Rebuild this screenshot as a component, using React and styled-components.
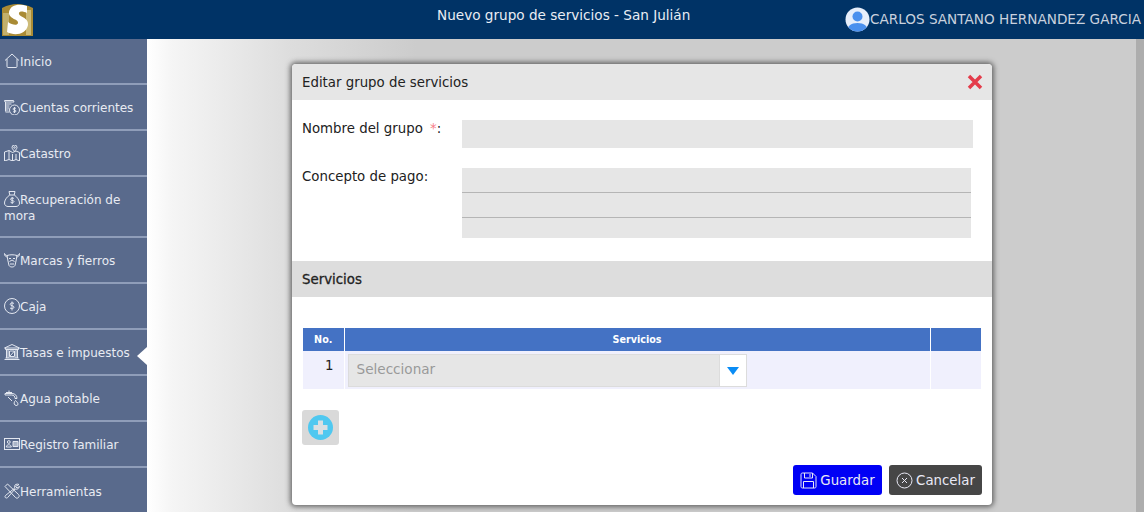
import React from "react";
import styled, { createGlobalStyle } from "styled-components";

const GlobalStyle = createGlobalStyle`
  html, body {
    margin: 0;
    padding: 0;
    height: 100%;
    overflow: hidden;
  }
  body {
    font-family: "DejaVu Sans", sans-serif;
    font-size: 14px;
    color: #222;
  }
  * { box-sizing: border-box; }
`;

const icons = {
  home: (
    <>
      <path d="M1 7.500 8 1l7 6.500" />
      <path d="M3 6v7.500c0 .6.400 1 1 1h8c.6 0 1-.4 1-1V6" />
    </>
  ),
  coins: (
    <>
      <path d="M.5 1.500h9l.5 1.500H1zM1.500 3v9.500M1.500 5h6M1.500 7h4M1.500 9h3.500M1.500 11h3M1.500 13h4" />
      <circle cx="10.500" cy="11" r="5" />
      <path d="M12 9.500c-.8-.8-3-.6-3 .6 0 1.300 3 .6 3 1.900 0 1.200-2.200 1.300-3 .5M10.500 8v6" />
    </>
  ),
  map: (
    <>
      <path d="M.5 7 5 5.500l3.500 2L12 6l3.500 1.500V16L12 14.500 8.500 16 5 14.500.5 16z" />
      <path d="M5 5.500v9M8.500 9v7M12 9v5.500" />
      <path d="M10.500 6.500c-1.500-2-2.500-3-2.500-4a2.500 2.500 0 0 1 5 0c0 1-1 2-2.500 4z" />
      <circle cx="10.500" cy="2.500" r=".8" />
    </>
  ),
  bag: (
    <>
      <path d="M5 .5h6L10.200 4H5.800z" />
      <path d="M5.800 4C2.500 6 .5 9.500.5 12c0 2.500 2 3.500 3.500 3.500h8c1.500 0 3.500-1 3.500-3.500 0-2.500-2-6-5.300-8" />
      <path d="M10 7.500c-.8-.8-3.500-.6-3.500.8 0 1.500 3.500.7 3.500 2.200 0 1.300-2.700 1.400-3.500.6M8.200 6v7" />
    </>
  ),
  bull: (
    <>
      <path d="M3.500 5C1.500 5 .5 3.500.5 1.500c1 1.500 1.500 2 3 2M12.500 5c2 0 3-1.500 3-3.500-1 1.500-1.500 2-3 2" />
      <path d="M3 3.500c3-1 7-1 10 0l-1 5.500-1 4.500c-1 2-5 2-6 0L4 9z" />
      <path d="M5 6.500h2M9 6.500h2M6 12h4M5.500 9.500 8 8l2.500 1.500" />
    </>
  ),
  dollar: (
    <>
      <circle cx="8" cy="8" r="7.500" />
      <path d="M10 5.500c-1-1-3.800-.8-3.800.9 0 1.800 3.800.8 3.800 2.800 0 1.600-2.800 1.800-4 .8M8 3.500v9" />
    </>
  ),
  bank: (
    <>
      <path d="M.5 4 8 .5 15.500 4zM1.500 4v1.500h13V4M.5 15.500h15M1.500 14h13" />
      <path d="M2.500 5.500V14M4 5.500V14M12 5.500V14M13.500 5.500V14" />
      <path d="M5.500 7h5v5.500h-5zM5.500 12.500l5-5.500" />
    </>
  ),
  tap: (
    <>
      <path d="M2 2.500h6M5 .5v2M1 5h6.500c2.500 0 3.500 1.500 3.500 3.500h2C13 5.500 11 3.500 8 3.500H1z" />
      <path d="M11.500 10.500c-1.500 1.500-2 3.500-.5 4.500s3 .5 3-1c0-1-1.500-2.500-2.500-3.500z" />
      <path d="M4 7l4 4" />
    </>
  ),
  card: (
    <>
      <rect x=".5" y="2.500" width="15" height="11" />
      <circle cx="4.800" cy="6" r="1.400" />
      <path d="M2.300 11c0-3 5-3 5 0z" />
      <path d="M9 5.500h5v5H9z" fill="currentColor" fillOpacity=".6" />
    </>
  ),
  tools: (
    <>
      <path d="M1 3.500 3.500 1l11 10.500c1 1 .8 2.200 0 3-.8.800-2 1-3 0z" />
      <path d="M15 1.500c-2-1-4.500 0-4.500 2 0 .6 0 1 .3 1.500L1.500 12.500c-1 1-.5 2.500 1 2.500.5 0 1-.2 1.200-.5L11 6c2 .8 4-.5 4.500-2.500L13 5l-1.500-1.500z" />
    </>
  ),
};

const menu = [
  { label: "Inicio", icon: "home" },
  { label: "Cuentas corrientes", icon: "coins" },
  { label: "Catastro", icon: "map" },
  { label: "Recuperación de mora", icon: "bag", tall: true },
  { label: "Marcas y fierros", icon: "bull" },
  { label: "Caja", icon: "dollar" },
  { label: "Tasas e impuestos", icon: "bank", active: true },
  { label: "Agua potable", icon: "tap" },
  { label: "Registro familiar", icon: "card" },
  { label: "Herramientas", icon: "tools" },
];

const MenuIcon = ({ name }) => (
  <IconSvg viewBox="0 0 16 16" width="16" height="16">
    {icons[name]}
  </IconSvg>
);

const Logo = () => (
  <svg width="34" height="35" viewBox="0 0 34 35">
    <path d="M2 7C8 4 12 3 17 3s10 1 16 4v28H2z" fill="#a98b35" />
    <path d="M26 9h5v25h-5z" fill="#cdbb78" />
    <path d="M3 12h6v22H3z" fill="#c2b06c" />
    <path
      d="M27 5C19 2 10 4 9 11c-1 7 10 7 9 11-.5 3-6 2-10-1l-1 10c7 4 19 3 21-7 1-8-10-8-9-12 .5-2 4-2 8 0z"
      fill="#fff"
    />
  </svg>
);

const Avatar = () => (
  <svg width="25" height="25" viewBox="0 0 25 25">
    <defs>
      <clipPath id="avatarClip">
        <circle cx="12.500" cy="12.500" r="12" />
      </clipPath>
    </defs>
    <circle cx="12.500" cy="12.500" r="12" fill="#e6eefb" />
    <g clipPath="url(#avatarClip)" fill="#4a90ee">
      <circle cx="12.500" cy="9.500" r="5" />
      <path d="M2 25c0-6 4-9 10.500-9S23 19 23 25z" />
    </g>
  </svg>
);

const App = () => (
  <>
    <GlobalStyle />
    <Page>
      <TopBar>
        <LogoBox>
          <Logo />
        </LogoBox>
        <PageTitle>Nuevo grupo de servicios - San Julián</PageTitle>
        <UserBox>
          <Avatar />
          <UserName>CARLOS SANTANO HERNANDEZ GARCIA</UserName>
        </UserBox>
      </TopBar>
      <Body>
        <Sidebar>
          {menu.map((item) => (
            <MenuItem key={item.label} $tall={item.tall} $active={item.active}>
              <div>
                <MenuIcon name={item.icon} />
                {item.label}
              </div>
            </MenuItem>
          ))}
        </Sidebar>
        <Content>
          <Modal>
            <ModalHeader>
              Editar grupo de servicios
              <CloseIcon viewBox="0 0 16 16" width="16" height="16">
                <path d="M2 2 14 14M14 2 2 14" />
              </CloseIcon>
            </ModalHeader>
            <FormRow>
              <FieldLabel>
                Nombre del grupo <Required>*</Required>:
              </FieldLabel>
              <NameInput />
            </FormRow>
            <ConceptRow>
              <FieldLabel>Concepto de pago:</FieldLabel>
              <ConceptBox />
            </ConceptRow>
            <SectionBar>Servicios</SectionBar>
            <TableWrap>
              <Table>
                <thead>
                  <tr>
                    <HeadCell $width={41}>No.</HeadCell>
                    <HeadCell>Servicios</HeadCell>
                    <HeadCell $width={51} />
                  </tr>
                </thead>
                <tbody>
                  <tr>
                    <NumberCell>1</NumberCell>
                    <BodyCell>
                      <SelectBox>
                        <SelectValue>Seleccionar</SelectValue>
                        <SelectArrow>
                          <svg width="12" height="8" viewBox="0 0 12 8">
                            <path d="M0 0h12L6 8z" fill="#0a8cf5" />
                          </svg>
                        </SelectArrow>
                      </SelectBox>
                    </BodyCell>
                    <BodyCell />
                  </tr>
                </tbody>
              </Table>
            </TableWrap>
            <AddButton>
              <svg width="25" height="25" viewBox="0 0 25 25">
                <circle cx="12.500" cy="12.500" r="12.500" fill="#4fc8f0" />
                <path d="M10 5.500h5V10h4.500v5H15v4.500h-5V15H5.500v-5H10z" fill="#d9dfe2" />
              </svg>
            </AddButton>
            <Actions>
              <ActionButton $color="#0000f5" $width={89}>
                <svg width="17" height="17" viewBox="0 0 17 17" fill="none" stroke="currentColor">
                  <path d="M1 2.500C1 1.500 1.500 1 2.500 1h10L16 4.500v10c0 1-.5 1.500-1.500 1.500h-12C1.500 16 1 15.500 1 14.500z" />
                  <path d="M4.500 1v5h8V1M10 2v3M3.500 16V9.500h10V16" />
                </svg>
                Guardar
              </ActionButton>
              <ActionButton $color="#464646" $width={93}>
                <svg width="17" height="17" viewBox="0 0 17 17" fill="none" stroke="currentColor">
                  <circle cx="8.500" cy="8.500" r="7.500" />
                  <path d="M6 6l5 5M11 6l-5 5" />
                </svg>
                Cancelar
              </ActionButton>
            </Actions>
          </Modal>
        </Content>
      </Body>
    </Page>
  </>
);

export default App;

const Page = styled.div`
  display: flex;
  flex-direction: column;
  width: 1144px;
  height: 512px;
  overflow: hidden;
`;

const TopBar = styled.header`
  display: flex;
  align-items: flex-start;
  flex: none;
  height: 39px;
  background: #003366;
  color: #d8deea;
`;

const LogoBox = styled.div`
  flex: none;
  width: 147px;
  padding: 1px 0 0 0;

  svg {
    display: block;
  }
`;

const PageTitle = styled.div`
  flex: 1;
  padding: 7px 0 0 290px;
  font-size: 13.600px;
  line-height: 17px;
  color: #e9edf4;
  white-space: nowrap;
`;

const UserBox = styled.div`
  display: flex;
  align-items: center;
  padding: 6px 3px 0 0;
`;

const UserName = styled.span`
  padding-top: 1px;
  font-size: 13.600px;
  line-height: 25px;
  color: #c9d1de;
  white-space: nowrap;
`;

const Body = styled.div`
  display: flex;
  flex: 1;
  min-height: 0;
`;

const Sidebar = styled.nav`
  flex: 0 0 147px;
  background: #596a8c;
  color: #e8ebf2;
`;

const MenuItem = styled.div`
  position: relative;
  display: flex;
  align-items: center;
  height: ${({ $tall }) => ($tall ? 61 : 46)}px;
  padding: 2px 4px 0;
  border-bottom: 2px solid #8f9db9;
  font-size: 12px;
  line-height: 15.500px;

  ${({ $active }) =>
    $active &&
    `
    &::after {
      content: "";
      position: absolute;
      right: 0;
      top: 17px;
      border-style: solid;
      border-width: 9px 10px 9px 0;
      border-color: transparent #fff transparent transparent;
    }
  `}

  &:last-child {
    border-bottom: 0;
  }
`;

const IconSvg = styled.svg`
  display: inline-block;
  vertical-align: -3px;
  fill: none;
  stroke: currentColor;
  stroke-width: 1;
  color: #e3e7f0;
`;

const Content = styled.main`
  flex: 1;
  display: flex;
  align-items: flex-start;
  padding: 25px 0 0 145px;
  background: linear-gradient(to right, #fff 0, #f5f5f5 25px, #dddddd 143px, #cccccc 270px);
  border-right: 8px solid #adadad;
`;

const Modal = styled.section`
  display: flex;
  flex-direction: column;
  width: 700px;
  height: 441px;
  background: #fff;
  border-radius: 4px;
  box-shadow: 0 0 5px 2px rgba(70, 70, 70, 0.75);
  overflow: hidden;
`;

const ModalHeader = styled.div`
  display: flex;
  align-items: center;
  justify-content: space-between;
  flex: 0 0 36px;
  padding: 0 9px 0 10px;
  background: #e6e6e6;
  font-size: 13.333px;
  color: #222;
`;

const CloseIcon = styled.svg`
  fill: none;
  stroke: #e43c4b;
  stroke-width: 3.500;
`;

const FormRow = styled.div`
  display: flex;
  align-items: flex-start;
  padding: 20px 19px 0 10px;
`;

const ConceptRow = styled(FormRow)`
  padding-right: 21px;
`;

const FieldLabel = styled.div`
  flex: 0 0 160px;
  padding-top: 1px;
  font-size: 13.333px;
  line-height: 16px;
  color: #222;
`;

const Required = styled.span`
  margin-left: 3px;
  color: #f77f8a;
`;

const NameInput = styled.div`
  flex: 1;
  height: 28px;
  background: #e6e6e6;
`;

const ConceptBox = styled.div`
  flex: 1;
  height: 70px;
  background:
    linear-gradient(#b5b5b5, #b5b5b5) 0 24px / 100% 1px no-repeat,
    linear-gradient(#b5b5b5, #b5b5b5) 0 49px / 100% 1px no-repeat,
    #e6e6e6;
`;

const SectionBar = styled.div`
  display: flex;
  align-items: center;
  flex: none;
  height: 36px;
  margin-top: 23px;
  padding-left: 10px;
  background: #dddddd;
  font-size: 13.333px;
  -webkit-text-stroke: 0.3px #222;
  color: #222;
`;

const TableWrap = styled.div`
  padding: 31px 11px 0;
`;

const Table = styled.table`
  width: 100%;
  border-collapse: collapse;
  table-layout: fixed;
`;

const HeadCell = styled.th`
  width: ${({ $width }) => ($width ? `${$width}px` : "auto")};
  height: 23px;
  padding: 0;
  background: #4472c4;
  border-right: 1px solid #fff;
  color: #fff;
  font-size: 9.600px;
  font-weight: 700;

  &:last-child {
    border-right: 0;
  }
`;

const BodyCell = styled.td`
  height: 38px;
  padding: 3px 2px 2px 3px;
  background: #f0f0fd;
  border-right: 1px solid #fff;

  &:last-child {
    border-right: 0;
  }
`;

const NumberCell = styled(BodyCell)`
  padding: 0 10px 10px 0;
  text-align: right;
  font-size: 13.333px;
  color: #222;
`;

const SelectBox = styled.div`
  display: flex;
  align-items: stretch;
  width: 399px;
  height: 33px;
  border: 1px solid #dcdcdc;
  background: #e6e6e6;
`;

const SelectValue = styled.div`
  display: flex;
  align-items: center;
  flex: 1;
  padding: 0 0 3px 8px;
  font-size: 13.600px;
  color: #999;
`;

const SelectArrow = styled.div`
  display: flex;
  align-items: center;
  justify-content: center;
  flex: 0 0 27px;
  background: #fff;
  border-left: 1px solid #dcdcdc;
`;

const AddButton = styled.div`
  display: flex;
  align-items: center;
  justify-content: center;
  flex: none;
  width: 37px;
  height: 35px;
  margin: 21px 0 0 10px;
  background: #d9d9d9;
  border-radius: 3px;
`;

const Actions = styled.div`
  display: flex;
  justify-content: flex-end;
  gap: 7px;
  margin-top: 20px;
  padding-right: 10px;
`;

const ActionButton = styled.div`
  display: flex;
  align-items: center;
  justify-content: center;
  gap: 3px;
  width: ${({ $width }) => $width}px;
  height: 30px;
  background: ${({ $color }) => $color};
  border-radius: 3px;
  color: #e9e9f5;
  font-size: 13.333px;
  white-space: nowrap;
`;
